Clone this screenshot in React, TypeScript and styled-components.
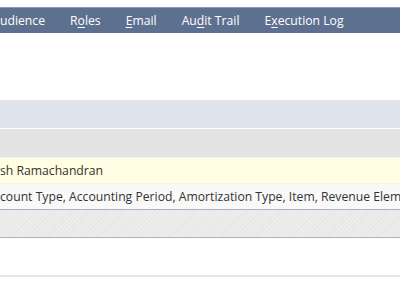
import styled, { createGlobalStyle } from "styled-components";

const GlobalStyle = createGlobalStyle`
  body {
    margin: 0;
    background: #fff;
    font-family: "Open Sans", "Liberation Sans", sans-serif;
    color: #333;
    overflow: hidden;
  }
`;

const Page = styled.div`
  width: 400px;
  height: 284px;
  padding-top: 7px;
  box-sizing: border-box;
`;

const NavBar = styled.nav`
  height: 26px;
  background: #5e7090;
  border-top: 1px solid #8a9ab4;
  box-sizing: border-box;
  display: flex;
  align-items: center;
  gap: 25px;
  white-space: nowrap;
`;

const NavItem = styled.span`
  color: #fff;
  font-size: 12.2px;
  line-height: 18px;

  u {
    text-decoration-thickness: 1px;
    text-underline-offset: 2px;
  }
`;

const Spacer = styled.div<{ $h: number }>`
  height: ${(p) => p.$h}px;
`;

const Band = styled.div<{ $bg: string; $line: string; $h: number }>`
  height: ${(p) => p.$h}px;
  background: ${(p) => p.$bg};
  border-bottom: 1px solid ${(p) => p.$line};
  display: flex;
  align-items: center;
  font-size: 12.2px;
  white-space: nowrap;
  overflow: hidden;
`;

const Hatched = styled.div`
  height: 27px;
  border-bottom: 1px solid #a8b4c6;
  background: repeating-linear-gradient(
    135deg,
    #ededed 0px,
    #ededed 2px,
    #e6e6e6 2px,
    #e6e6e6 3px
  );
`;

const FooterLine = styled.div`
  height: 2px;
  background: #e6e6e6;
`;

export default function App() {
  return (
    <>
      <GlobalStyle />
      <Page>
        <NavBar>
          <NavItem>udience</NavItem>
          <NavItem>
            R<u>o</u>les
          </NavItem>
          <NavItem>
            <u>E</u>mail
          </NavItem>
          <NavItem>
            Au<u>d</u>it Trail
          </NavItem>
          <NavItem>
            E<u>x</u>ecution Log
          </NavItem>
        </NavBar>
        <Spacer $h={67} />
        <Band $h={28} $bg="#dfe4ec" $line="#ffffff" />
        <Band $h={28} $bg="#e3e3e3" $line="#f0f0f0" />
        <Band $h={25} $bg="#fffee3" $line="#f4f4ee">
          sh Ramachandran
        </Band>
        <Band $h={25} $bg="#f9f9f9" $line="#a8b4c6">
          count Type, Accounting Period, Amortization Type, Item, Revenue Eleme
        </Band>
        <Hatched />
        <Spacer $h={37} />
        <FooterLine />
      </Page>
    </>
  );
}
